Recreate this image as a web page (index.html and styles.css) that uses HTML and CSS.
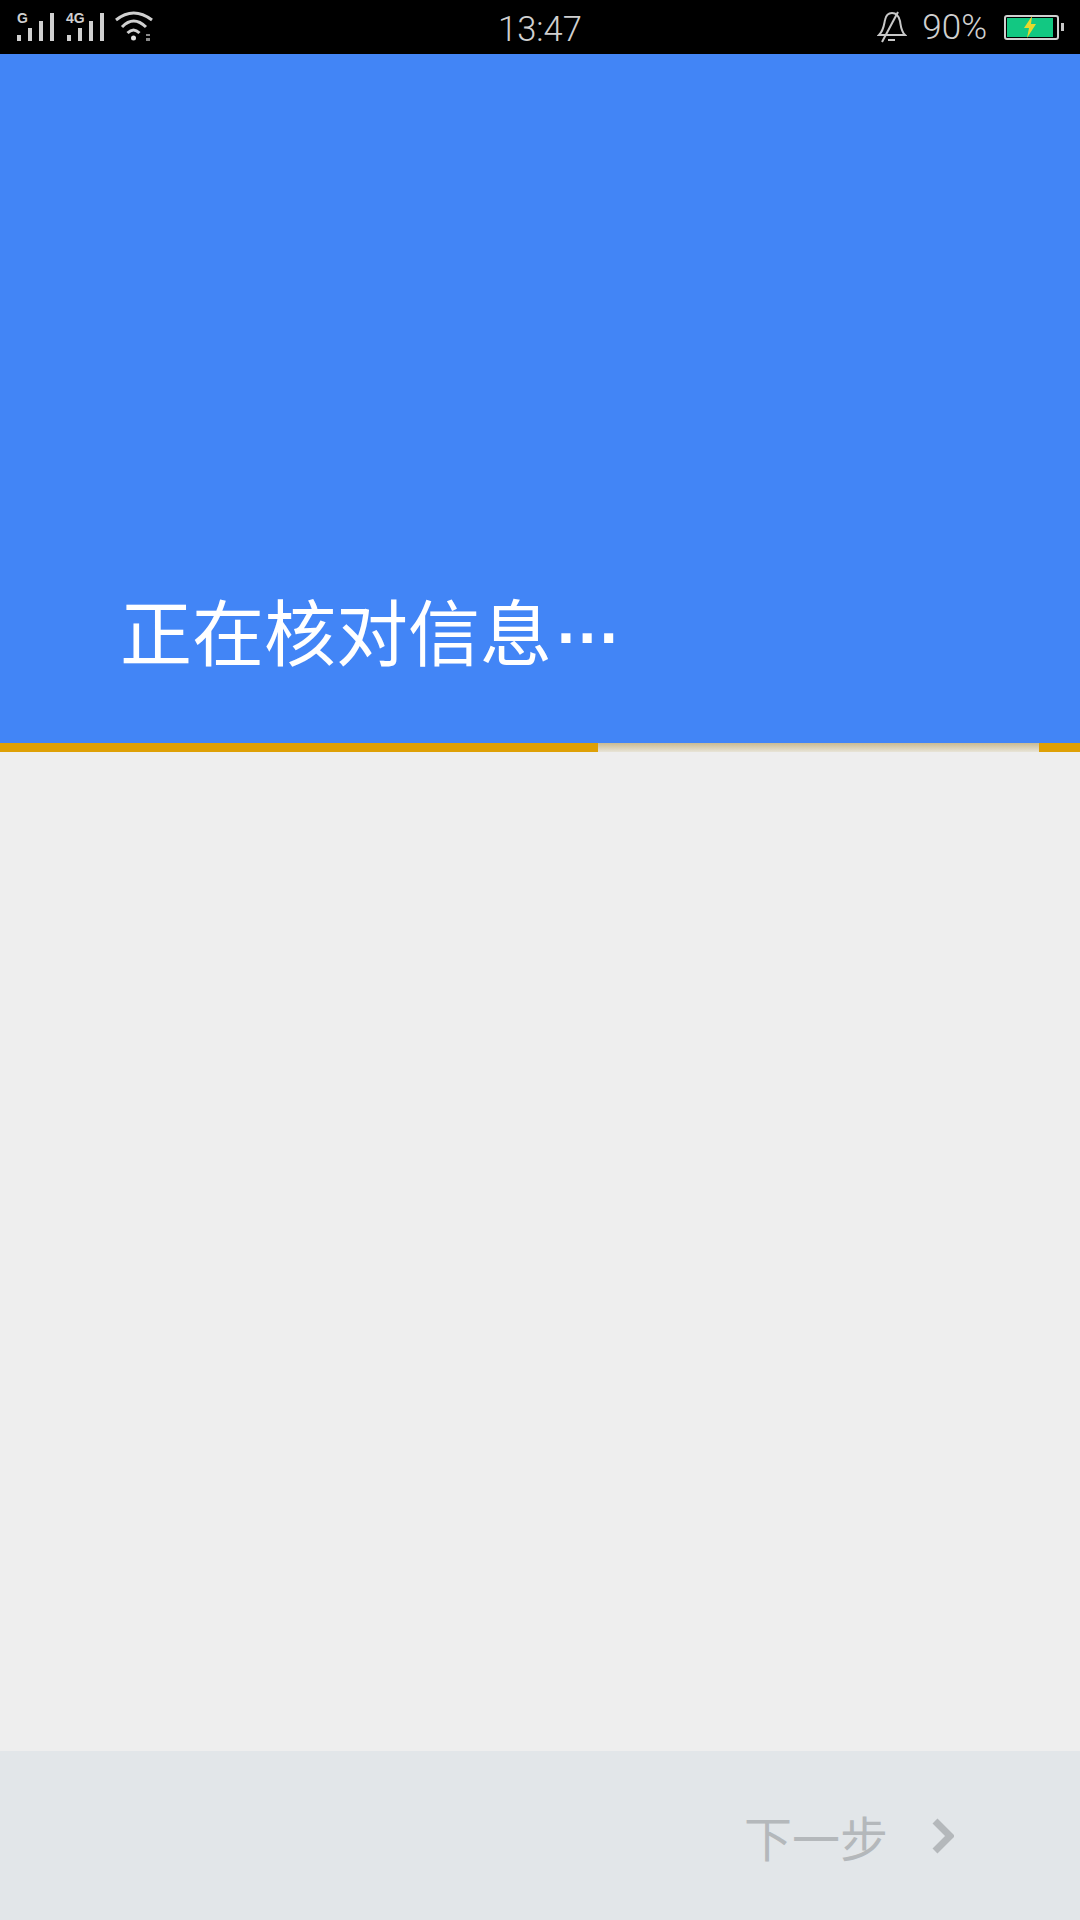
FILE: index.html
```html
<!DOCTYPE html>
<html lang="zh-CN">
<head>
  <meta charset="UTF-8">
  <title>正在核对信息</title>
  <link rel="stylesheet" href="styles.css">
</head>
<body>
  <div class="statusbar">
    <div class="status-left">
      <svg class="signal" width="38" height="54" viewBox="0 0 38 54">
        <text x="0" y="23" class="net">G</text>
        <rect x="0" y="35" width="4" height="6" />
        <rect x="11" y="28" width="4" height="13" />
        <rect x="22" y="21" width="4" height="20" />
        <rect x="33" y="13" width="4" height="28" />
      </svg>
      <svg class="signal" width="38" height="54" viewBox="0 0 38 54">
        <text x="0" y="23" class="net">4G</text>
        <rect x="1" y="35" width="4" height="6" />
        <rect x="12" y="28" width="4" height="13" />
        <rect x="23" y="21" width="4" height="20" />
        <rect x="34" y="13" width="4" height="28" />
      </svg>
      <svg class="wifi" width="38" height="54" viewBox="0 0 38 54">
        <path d="M1 20 Q18.500 6 37 20" />
        <path d="M7 27 Q18.500 15 31 27" />
        <path d="M12.500 33 Q18.500 27 24.500 33" />
        <circle cx="18.500" cy="38" r="2.500" class="dot" />
        <rect x="31" y="34" width="4" height="2" class="dot dim" />
        <rect x="31" y="38" width="4" height="3" class="dot dim" />
      </svg>
    </div>
    <div class="clock">13:47</div>
    <div class="status-right">
      <svg class="bell" width="30" height="34" viewBox="0 0 30 34">
        <path d="M2 25 C7 20 7 14 8 10 C9 5 12 3 15 3 C20 3 22 7 23 11 C24 17 24 21 28 25 Z" />
        <path d="M11 30 H18" />
        <path d="M21 2 L5 32" />
      </svg>
      <span class="percent">90%</span>
      <div class="battery">
        <div class="battery-body">
          <div class="battery-fill">
            <svg width="14" height="22" viewBox="0 0 14 22">
              <path d="M9 0 L1 12 H6 L4 22 L13 8 H8 Z" />
            </svg>
          </div>
        </div>
        <div class="battery-cap"></div>
      </div>
    </div>
  </div>

  <div class="header">
    <h1 class="title">正在核对信息<span class="dots">···</span></h1>
  </div>

  <div class="progress">
    <div class="progress-left"></div>
    <div class="progress-gap"></div>
    <div class="progress-right"></div>
  </div>

  <div class="content"></div>

  <div class="footer">
    <div class="next">
      <span>下一步</span>
      <svg width="22" height="36" viewBox="0 0 22 36">
        <path d="M3 3 L18 18 L3 33" />
      </svg>
    </div>
  </div>
</body>
</html>
```

FILE: styles.css
```css
body {
  margin: 0;
  display: flex;
  flex-direction: column;
  height: 1920px;
  font-family: "Liberation Sans", "Noto Sans CJK SC", sans-serif;
  background: #eeeeee;
  overflow: hidden;
}
.statusbar {
  height: 54px;
  flex-shrink: 0;
  background: #000000;
  color: #d0d0d0;
  display: flex;
  align-items: center;
  justify-content: space-between;
  position: relative;
}
.status-left {
  display: flex;
  align-items: center;
  gap: 11px;
  padding-left: 17px;
}
.signal {
  overflow: visible;
  fill: #d0d0d0;
}
.net {
  font-family: "Liberation Sans", sans-serif;
  font-size: 14px;
  font-weight: 700;
  fill: #d0d0d0;
}
.wifi {
  fill: none;
  stroke: #d0d0d0;
  stroke-width: 3;
}
.wifi .dot {
  fill: #e0e0e0;
  stroke: none;
}
.wifi .dim {
  fill: #8a8a8a;
}
.clock {
  position: absolute;
  left: 0;
  right: 0;
  padding-top: 4px;
  text-align: center;
  font-family: "Roboto", sans-serif;
  font-size: 34.500px;
  font-weight: 300;
}
.status-right {
  display: flex;
  align-items: center;
  padding-right: 16px;
}
.bell {
  fill: none;
  stroke: #c8c8c8;
  stroke-width: 2;
  margin-right: 15px;
}
.percent {
  font-family: "Roboto", sans-serif;
  font-size: 35px;
  font-weight: 300;
  margin-right: 17px;
}
.battery {
  display: flex;
  align-items: center;
}
.battery-body {
  width: 49px;
  height: 19px;
  border: 2px solid #d0d0d0;
  border-radius: 3px;
  padding: 1px;
}
.battery-fill {
  width: 46px;
  height: 19px;
  background: #12c882;
  display: flex;
  align-items: center;
  justify-content: center;
}
.battery-fill svg {
  fill: #e8d92c;
  overflow: visible;
}
.battery-cap {
  width: 3px;
  height: 8px;
  margin-left: 2px;
  background: #c8c8c8;
}
.header {
  height: 689px;
  flex-shrink: 0;
  background: #4285f6;
  display: flex;
  align-items: flex-end;
  padding-left: 120px;
  box-sizing: border-box;
}
.title {
  margin: 0 0 60px;
  font-family: "Noto Sans CJK SC", sans-serif;
  font-size: 72px;
  line-height: 90px;
  font-weight: 400;
  color: #ffffff;
}
.dots {
  margin-left: 5px;
  font-family: "Liberation Sans", sans-serif;
  font-size: 64px;
  font-weight: 700;
}
.progress {
  height: 9px;
  flex-shrink: 0;
  display: flex;
}
.progress-left {
  width: 598px;
  background: #dea006;
}
.progress-gap {
  flex: 1;
  background: linear-gradient(#c9bb92, #e8e4d8);
}
.progress-right {
  width: 41px;
  background: #dea006;
}
.content {
  flex: 1;
}
.footer {
  height: 169px;
  flex-shrink: 0;
  background: #e2e6e9;
  display: flex;
  align-items: center;
  justify-content: flex-end;
  padding-right: 126px;
}
.next {
  display: flex;
  align-items: center;
  gap: 44px;
  color: #b4b8bb;
  font-family: "Noto Sans CJK SC", sans-serif;
  font-size: 48px;
  font-weight: 400;
}
.next svg {
  fill: none;
  stroke: #b4b8bb;
  stroke-width: 7;
}
```
